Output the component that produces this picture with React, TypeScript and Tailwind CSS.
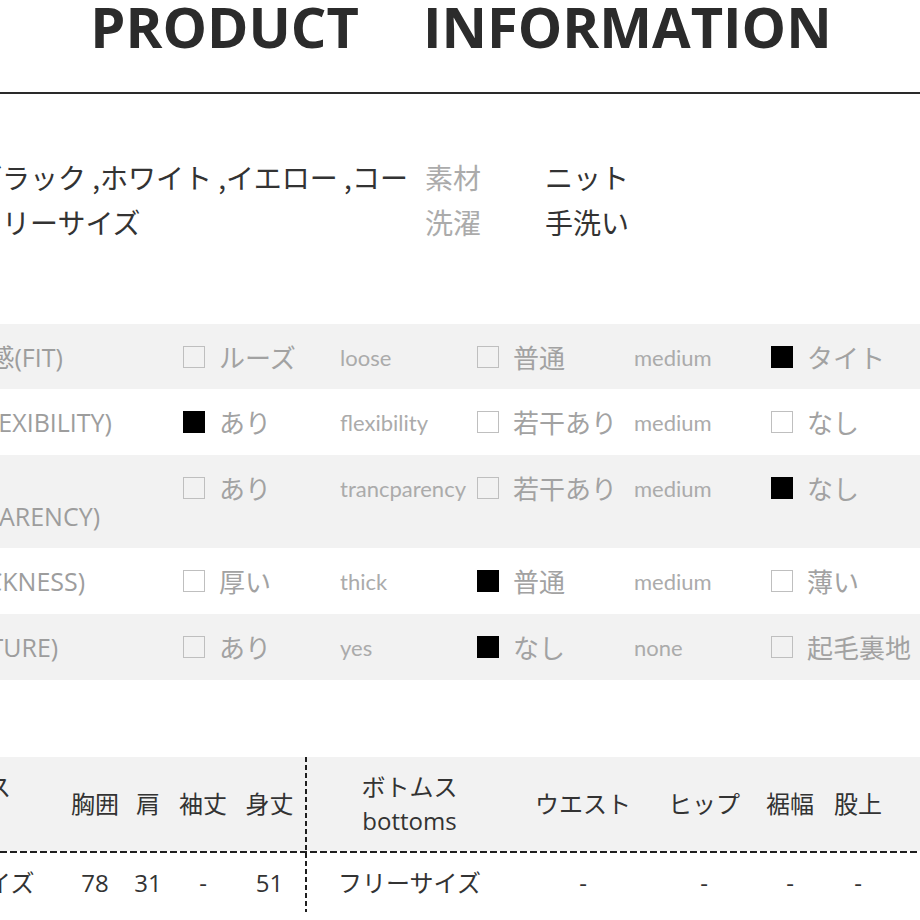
import React from "react";

type Opt = [boolean, string, string];
type Row = { label: string[]; opts: Opt[]; h: string; gray: boolean };

const rows: Row[] = [
  { label: ["フィット感(FIT)"], opts: [[false, "ルーズ", "loose"], [false, "普通", "medium"], [true, "タイト", ""]], h: "h-[65px]", gray: true },
  { label: ["伸縮性(FLEXIBILITY)"], opts: [[true, "あり", "flexibility"], [false, "若干あり", "medium"], [false, "なし", ""]], h: "h-[66px]", gray: false },
  { label: ["透け感", "(TRANSPARENCY)"], opts: [[false, "あり", "trancparency"], [false, "若干あり", "medium"], [true, "なし", ""]], h: "h-[93px]", gray: true },
  { label: ["厚さ(THICKNESS)"], opts: [[false, "厚い", "thick"], [true, "普通", "medium"], [false, "薄い", ""]], h: "h-[66px]", gray: false },
  { label: ["裏地(TEXTURE)"], opts: [[false, "あり", "yes"], [true, "なし", "none"], [false, "起毛裏地", ""]], h: "h-[66px]", gray: true },
];

function Box({ on }: { on: boolean }) {
  return on ? (
    <span className="block w-[22px] h-[22px] bg-black shrink-0" />
  ) : (
    <span className="block w-[22px] h-[22px] border-[1.5px] border-[#bfbfbf] shrink-0" />
  );
}

const hDash =
  "h-[2px] bg-[repeating-linear-gradient(90deg,#1f1f1f_0px,#1f1f1f_7px,transparent_7px,transparent_10px)]";
const vDash =
  "w-[2px] self-stretch bg-[repeating-linear-gradient(180deg,#1f1f1f_0px,#1f1f1f_5px,transparent_5px,transparent_8px)]";

const cols = "grid grid-cols-[206px_58px_48px_62px_71px_2px_205px_142px_100px_72px_64px_1fr]";

export default function App() {
  return (
    <div className="w-[920px] h-[920px] overflow-hidden bg-white font-['Open_Sans','Noto_Sans_CJK_JP',sans-serif]">
      {/* Title */}
      <div className="h-[92px]">
        <h1 className="flex justify-center gap-[64px] text-[56px] leading-[52px] font-bold text-[#2b2b2b] font-['Open_Sans',sans-serif] pl-[2px]">
          <span>PRODUCT</span>
          <span>INFORMATION</span>
        </h1>
      </div>
      <div className="h-[2px] bg-[#2a2a2a]" />

      {/* Info */}
      <div className="mt-[61px] -ml-[26px] w-[1000px] text-[28px] leading-[45px] font-['Noto_Sans_CJK_JP',sans-serif]">
        <div className="flex">
          <div className="w-[451px] shrink-0 overflow-hidden whitespace-nowrap text-[#333]">ブラック ,ホワイト ,イエロー ,コー</div>
          <div className="w-[120px] shrink-0 text-[#ababab]">素材</div>
          <div className="text-[#333]">ニット</div>
        </div>
        <div className="flex">
          <div className="w-[451px] shrink-0 text-[#333]">フリーサイズ</div>
          <div className="w-[120px] shrink-0 text-[#ababab]">洗濯</div>
          <div className="text-[#333]">手洗い</div>
        </div>
      </div>

      {/* Attributes */}
      <div className="mt-[79px] -ml-[110px] w-[1250px]">
        {rows.map((r, i) => (
          <div key={i} className={`flex items-start pt-[19px] ${r.h} ${r.gray ? "bg-[#f2f2f2]" : "bg-white"}`}>
            <div className="w-[293px] shrink-0 text-[25px] leading-[28px] text-[#9d9d9d] whitespace-nowrap">
              {r.label.map((l, j) => (
                <div key={j} className={j === 1 ? "pl-[9px]" : ""}>{l}</div>
              ))}
            </div>
            {r.opts.map((o, j) => (
              <React.Fragment key={j}>
                <div className="w-[157px] h-[28px] flex items-center gap-[14px] shrink-0">
                  <Box on={o[0]} />
                  <span className="text-[26px] leading-[28px] text-[#a2a2a2] whitespace-nowrap font-['Noto_Sans_CJK_JP',sans-serif]">{o[1]}</span>
                </div>
                <div className="w-[137px] h-[28px] flex items-center text-[22px] text-[#ababab] font-['Lato',sans-serif] shrink-0 whitespace-nowrap">
                  {o[2]}
                </div>
              </React.Fragment>
            ))}
          </div>
        ))}
      </div>

      {/* Size table */}
      <div className="mt-[77px] -ml-[140px] w-[1100px] text-[24px] leading-[34px] text-[#333]">
        <div className={`${cols} h-[94px] bg-[#f2f2f2] items-center text-center`}>
          <div>トップス<br />tops</div>
          <div>胸囲</div>
          <div>肩</div>
          <div>袖丈</div>
          <div>身丈</div>
          <div className={vDash} />
          <div>ボトムス<br />bottoms</div>
          <div>ウエスト</div>
          <div>ヒップ</div>
          <div>裾幅</div>
          <div>股上</div>
          <div />
        </div>
        <div className={hDash} />
        <div className={`${cols} h-[59px] items-center text-center`}>
          <div>フリーサイズ</div>
          <div>78</div>
          <div>31</div>
          <div>-</div>
          <div>51</div>
          <div className={vDash} />
          <div>フリーサイズ</div>
          <div>-</div>
          <div>-</div>
          <div>-</div>
          <div>-</div>
          <div />
        </div>
      </div>
    </div>
  );
}
